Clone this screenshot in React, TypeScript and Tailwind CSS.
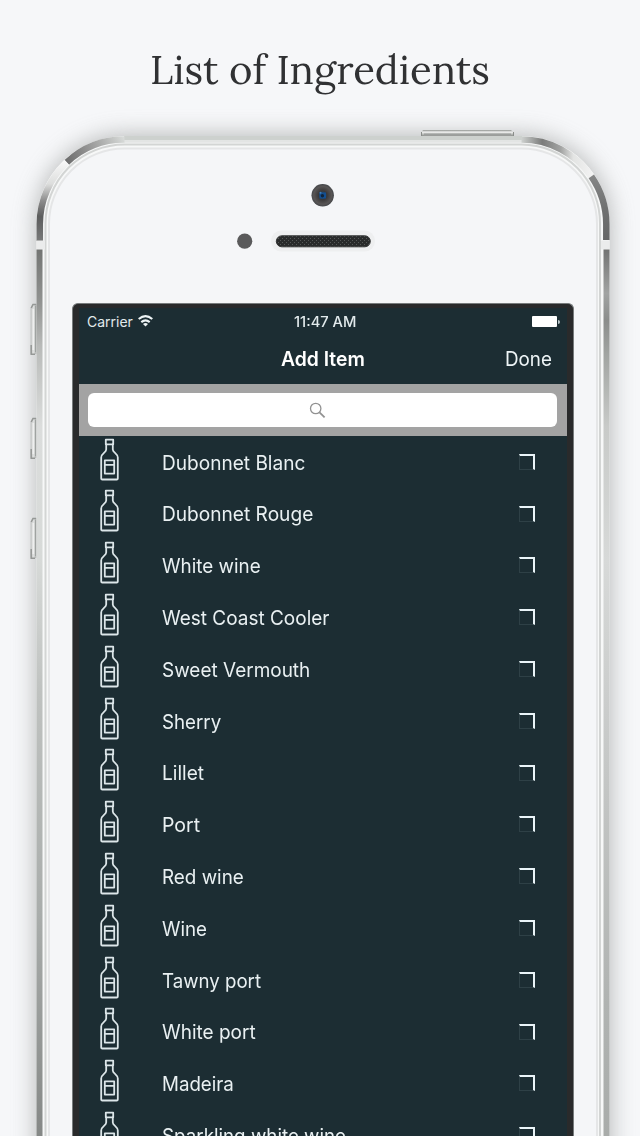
import React from "react";

const ingredients = [
  { name: "Dubonnet Blanc", width: 143 },
  { name: "Dubonnet Rouge", width: 151 },
  { name: "White wine", width: 99 },
  { name: "West Coast Cooler", width: 167 },
  { name: "Sweet Vermouth", width: 148 },
  { name: "Sherry", width: 59 },
  { name: "Lillet", width: 42 },
  { name: "Port", width: 38 },
  { name: "Red wine", width: 82 },
  { name: "Wine", width: 45 },
  { name: "Tawny port", width: 99 },
  { name: "White port", width: 94 },
  { name: "Madeira", width: 72 },
  { name: "Sparkling white wine", width: 184 },
];

function Bottle() {
  return (
    <svg width="20" height="44" viewBox="0 0 20 44" fill="none" stroke="#dce6e9" strokeWidth="1.8" strokeLinejoin="round" className="mt-[1.2px] block shrink-0">
      <path d="M5.8 1.7H13.2V6.2H12.8V11.5C12.8 14.6 17.8 15.3 17.8 19.5V40.4Q17.8 41.5 16.7 41.5H2.3Q1.2 41.5 1.2 40.4V19.5C1.2 15.3 6.2 14.6 6.2 11.5V6.2H5.8Z" />
      <path d="M6 6.4H13M4.8 22.4H14.2V35.6H4.8ZM4.8 26.8H14.2" />
    </svg>
  );
}

function SideButton({ y, height }: { y: number; height: number }) {
  return (
    <g>
      <path d={`M37 ${y}H32.5L30.5 ${y + 4}V${y + height - 1}H37Z`} fill="url(#button)" />
      <path d={`M36.5 ${y + 0.6}H33L31.2 ${y + 4}M31.2 ${y + height - 10}V${y + height - 0.8}H35`} fill="none" stroke="#959896" strokeWidth="1.5" />
      <path d={`M33.3 ${y + 5}V${y + height - 5}`} stroke="#eeefee" strokeWidth="1.6" />
      <path d={`M35.8 ${y + 2}V${y + height - 3}`} stroke="#9da09e" strokeWidth="1.4" />
    </g>
  );
}

function PhoneBody() {
  return (
    <svg width="640" height="1136" viewBox="0 0 640 1136" className="absolute inset-0" fill="none">
      <defs>
        <filter id="soft" x="-20%" y="-20%" width="140%" height="140%">
          <feGaussianBlur stdDeviation="12" />
        </filter>
        <linearGradient id="button">
          <stop stopColor="#c2c4c3" />
          <stop offset=".5" stopColor="#dfe1e0" />
          <stop offset="1" stopColor="#9b9e9c" />
        </linearGradient>
        <linearGradient id="leftTop" gradientUnits="userSpaceOnUse" x1="67" y1="162" x2="124" y2="139">
          <stop stopColor="#6d6d6d" />
          <stop offset=".25" stopColor="#858585" />
          <stop offset=".6" stopColor="#a9aaa9" />
          <stop offset="1" stopColor="#d7dad8" />
        </linearGradient>
        <linearGradient id="leftArc" gradientUnits="userSpaceOnUse" x1="0" y1="162" x2="0" y2="240">
          <stop stopColor="#f7f7f7" />
          <stop offset=".28" stopColor="#dddedd" />
          <stop offset=".5" stopColor="#8b8b8b" />
          <stop offset=".7" stopColor="#5c5d5d" />
          <stop offset="1" stopColor="#777878" />
        </linearGradient>
        <linearGradient id="rightTop" gradientUnits="userSpaceOnUse" x1="520" y1="0" x2="594" y2="0">
          <stop stopColor="#d4d7d5" />
          <stop offset=".3" stopColor="#7b7c7b" />
          <stop offset=".55" stopColor="#a2a3a2" />
          <stop offset=".72" stopColor="#e3e4e3" />
          <stop offset="1" stopColor="#f4f4f4" />
        </linearGradient>
        <linearGradient id="rightArc" gradientUnits="userSpaceOnUse" x1="0" y1="176" x2="0" y2="240">
          <stop stopColor="#858686" />
          <stop offset=".5" stopColor="#707171" />
          <stop offset="1" stopColor="#666767" />
        </linearGradient>
        <linearGradient id="leftSide" gradientUnits="userSpaceOnUse" x1="0" y1="249" x2="0" y2="1136">
          <stop stopColor="#737573" />
          <stop offset=".06" stopColor="#919391" />
          <stop offset=".11" stopColor="#b9bbb9" />
          <stop offset=".2" stopColor="#dbdddc" />
          <stop offset=".35" stopColor="#d7dad8" />
          <stop offset=".5" stopColor="#bfc2c0" />
          <stop offset=".75" stopColor="#a9adab" />
          <stop offset="1" stopColor="#858886" />
        </linearGradient>
        <linearGradient id="rightSide" gradientUnits="userSpaceOnUse" x1="0" y1="249" x2="0" y2="1136">
          <stop stopColor="#727372" />
          <stop offset=".05" stopColor="#a1a3a2" />
          <stop offset=".08" stopColor="#8b8d8b" />
          <stop offset=".12" stopColor="#a2a5a2" />
          <stop offset=".2" stopColor="#c8cac8" />
          <stop offset=".35" stopColor="#d7d9d8" />
          <stop offset=".6" stopColor="#c4c6c5" />
          <stop offset=".85" stopColor="#b0b3b1" />
          <stop offset="1" stopColor="#a9acaa" />
        </linearGradient>
        <linearGradient id="topButton" x1="0" y1="0" x2="0" y2="1">
          <stop stopColor="#8f928f" />
          <stop offset=".35" stopColor="#f2f3f2" />
          <stop offset="1" stopColor="#8b8e8b" />
        </linearGradient>
        <radialGradient id="camera">
          <stop stopColor="#162c44" />
          <stop offset=".28" stopColor="#28415c" />
          <stop offset=".38" stopColor="#3a3839" />
          <stop offset=".8" stopColor="#585555" />
          <stop offset="1" stopColor="#45474a" />
        </radialGradient>
        <pattern id="mesh" width="4" height="4" patternUnits="userSpaceOnUse">
          <rect width="4" height="4" fill="#292b2b" />
          <path d="M0 0H1V1H0ZM2 2H3V3H2Z" fill="#565958" />
        </pattern>
      </defs>
      <path d="M37 1180V224A88 88 0 0 1 125 136H521.5A88 88 0 0 1 609.5 224V1180Z" fill="#8c8f8d" opacity=".66" filter="url(#soft)" />
      <SideButton y={304} height={51} />
      <SideButton y={418} height={41} />
      <SideButton y={518} height={41} />
      <path d="M421 136V133L423 130H511L514 133V136Z" fill="url(#topButton)" />
      <path d="M421.5 136V132M513.5 136V132" stroke="#8a8d8a" />
      <path d="M424 134.5H511" stroke="#9da09e" strokeWidth="2" />
      <path d="M36.5 1140V224A88 88 0 0 1 124.5 136H521.5A88 88 0 0 1 609.5 224V1140Z" fill="#f7f8f8" />
      <path d="M45.5 1140V224A79 79 0 0 1 124.5 144.5H521.5A79 79 0 0 1 600 224V1140" stroke="#d3d5d4" strokeWidth="2" />
      <path d="M49 1140V225A75.5 75.5 0 0 1 124.5 148.5H521.5A75.5 75.5 0 0 1 597 225V1140Z" fill="#f5f6f8" stroke="#e5e6e7" strokeWidth="2" />
      <path d="M124 138H522" stroke="#cdd1ce" strokeWidth="4" />
      <path d="M124 141.3H522" stroke="#e3e5e4" strokeWidth="2.8" />
      <g strokeWidth="6.5">
        <path d="M66.8 162.3A84.5 84.5 0 0 1 124.5 139.5" stroke="url(#leftTop)" />
        <path d="M39.8 241V224A84.5 84.5 0 0 1 66.8 162.3" stroke="url(#leftArc)" />
        <path d="M521.5 139.5A84.5 84.5 0 0 1 591.3 176.4" stroke="url(#rightTop)" />
        <path d="M591.3 176.4A84.5 84.5 0 0 1 606.3 224V240" stroke="url(#rightArc)" />
      </g>
      <path d="M36.5 240.5H45V249.5H36.5ZM601 240.5H609.5V249.5H601Z" fill="#ebecec" />
      <path d="M36.5 249.5H42.5V1136H36.5Z" fill="url(#leftSide)" />
      <path d="M603.5 249.5H609.5V1136H603.5Z" fill="url(#rightSide)" />
      <circle cx="322.7" cy="195.3" r="11.2" fill="url(#camera)" />
      <path d="M319.5 192.5H326V198.5H319.5Z" fill="#134f91" />
      <circle cx="322.4" cy="195.7" r="1.7" fill="#102338" />
      <circle cx="320.5" cy="192.8" r="1" fill="#3f7fb8" />
      <circle cx="244.7" cy="241.2" r="7.6" fill="#5a5a5b" />
      <rect x="271" y="230.5" width="104" height="21" rx="10.5" fill="#eeeff0" />
      <rect x="276.3" y="235.8" width="94" height="11" rx="5.5" fill="url(#mesh)" stroke="#353737" />
    </svg>
  );
}

function FittedText({ children, width }: { children: string; width: number }) {
  const ref = React.useRef<HTMLSpanElement>(null);
  const [scale, setScale] = React.useState(1);
  React.useLayoutEffect(() => {
    if (ref.current) setScale(width / ref.current.offsetWidth);
  }, [width]);
  return (
    <span ref={ref} className="inline-block origin-left whitespace-nowrap" style={{ transform: `scaleX(${scale})` }}>
      {children}
    </span>
  );
}

export default function App() {
  return (
    <main className="relative flex h-[1136px] w-[640px] flex-col overflow-hidden bg-[#f6f7f9] font-['Inter',sans-serif]">
      <PhoneBody />
      <h1 className="relative h-[303px] shrink-0 pt-[44px] pl-[150px] font-['Lora','Liberation_Serif',serif] text-[40px] leading-[52px] text-[#303133]">
        <FittedText width={340}>List of Ingredients</FittedText>
      </h1>
      <section className="relative ml-[72px] flex h-[833px] w-[502px] shrink-0 flex-col overflow-hidden rounded-t-[6px] border-x border-t border-[#777b7c] bg-[#292a2b] px-[6px] pt-[4px]">
        <div className="flex h-[825px] grow flex-col bg-[#1c2d33]">
          <div className="grid h-[27px] shrink-0 grid-cols-3 items-center px-2 text-[14px] text-[#e2eaec]">
            <div className="flex items-center gap-[5px]">
              <FittedText width={46}>Carrier</FittedText>
              <svg width="15" height="12" viewBox="0 0 15 12" fill="none" stroke="#edf3f4" strokeWidth="2.1" className="mb-[1px]">
                <path d="M.7 4Q7.5-1.6 14.3 4M3.3 7.1Q7.5 3.5 11.7 7.1" />
                <path d="M5 8.9Q7.5 7 10 8.9L7.5 11.6Z" fill="#edf3f4" stroke="none" />
              </svg>
            </div>
            <div className="pl-[50px] font-medium">
              <FittedText width={63}>11:47 AM</FittedText>
            </div>
            <div className="-mr-px flex items-center justify-end">
              <div className="h-[11px] w-[25px] rounded-[1px] bg-white" />
              <div className="ml-px h-1 w-[2px] rounded-r bg-[#b9c6c9]" />
            </div>
          </div>
          <div className="flex h-[49.4px] shrink-0 items-center pb-px text-[20px] text-[#edf4f6]">
            <div className="w-[426px] pl-[202px] font-semibold text-white">
              <FittedText width={84}>Add Item</FittedText>
            </div>
            <FittedText width={47}>Done</FittedText>
          </div>
          <div className="flex h-[52px] shrink-0 items-center bg-[#a3a3a3] px-[9.4px]">
            <div className="flex h-[34px] w-[469px] shrink-0 items-center rounded-[6px] bg-white pl-[221px]">
              <svg width="17" height="17" viewBox="0 0 17 17" fill="none" stroke="#929292" strokeWidth="1.3">
                <circle cx="6.7" cy="6.5" r="5.2" />
                <path d="M10.5 10.3L15.6 15.4" strokeWidth="1.8" />
              </svg>
            </div>
          </div>
          <ul className="flex flex-col text-[20px] text-[#e9f0f2]">
            {ingredients.map((item) => (
              <li key={item.name} className="flex h-[51.8px] shrink-0 items-start pl-[21px]">
                <Bottle />
                <div className="ml-[42px] w-[357px] pt-[11.3px] leading-[30px]">
                  <FittedText width={item.width}>{item.name}</FittedText>
                </div>
                <div className="mt-[17.5px] size-4 border-t-[2px] border-r-[2px] border-b border-l border-t-[#eaf4f8] border-r-[#eaf4f8] border-b-[#2e4046] border-l-[#2e4046]" />
              </li>
            ))}
          </ul>
        </div>
      </section>
    </main>
  );
}
